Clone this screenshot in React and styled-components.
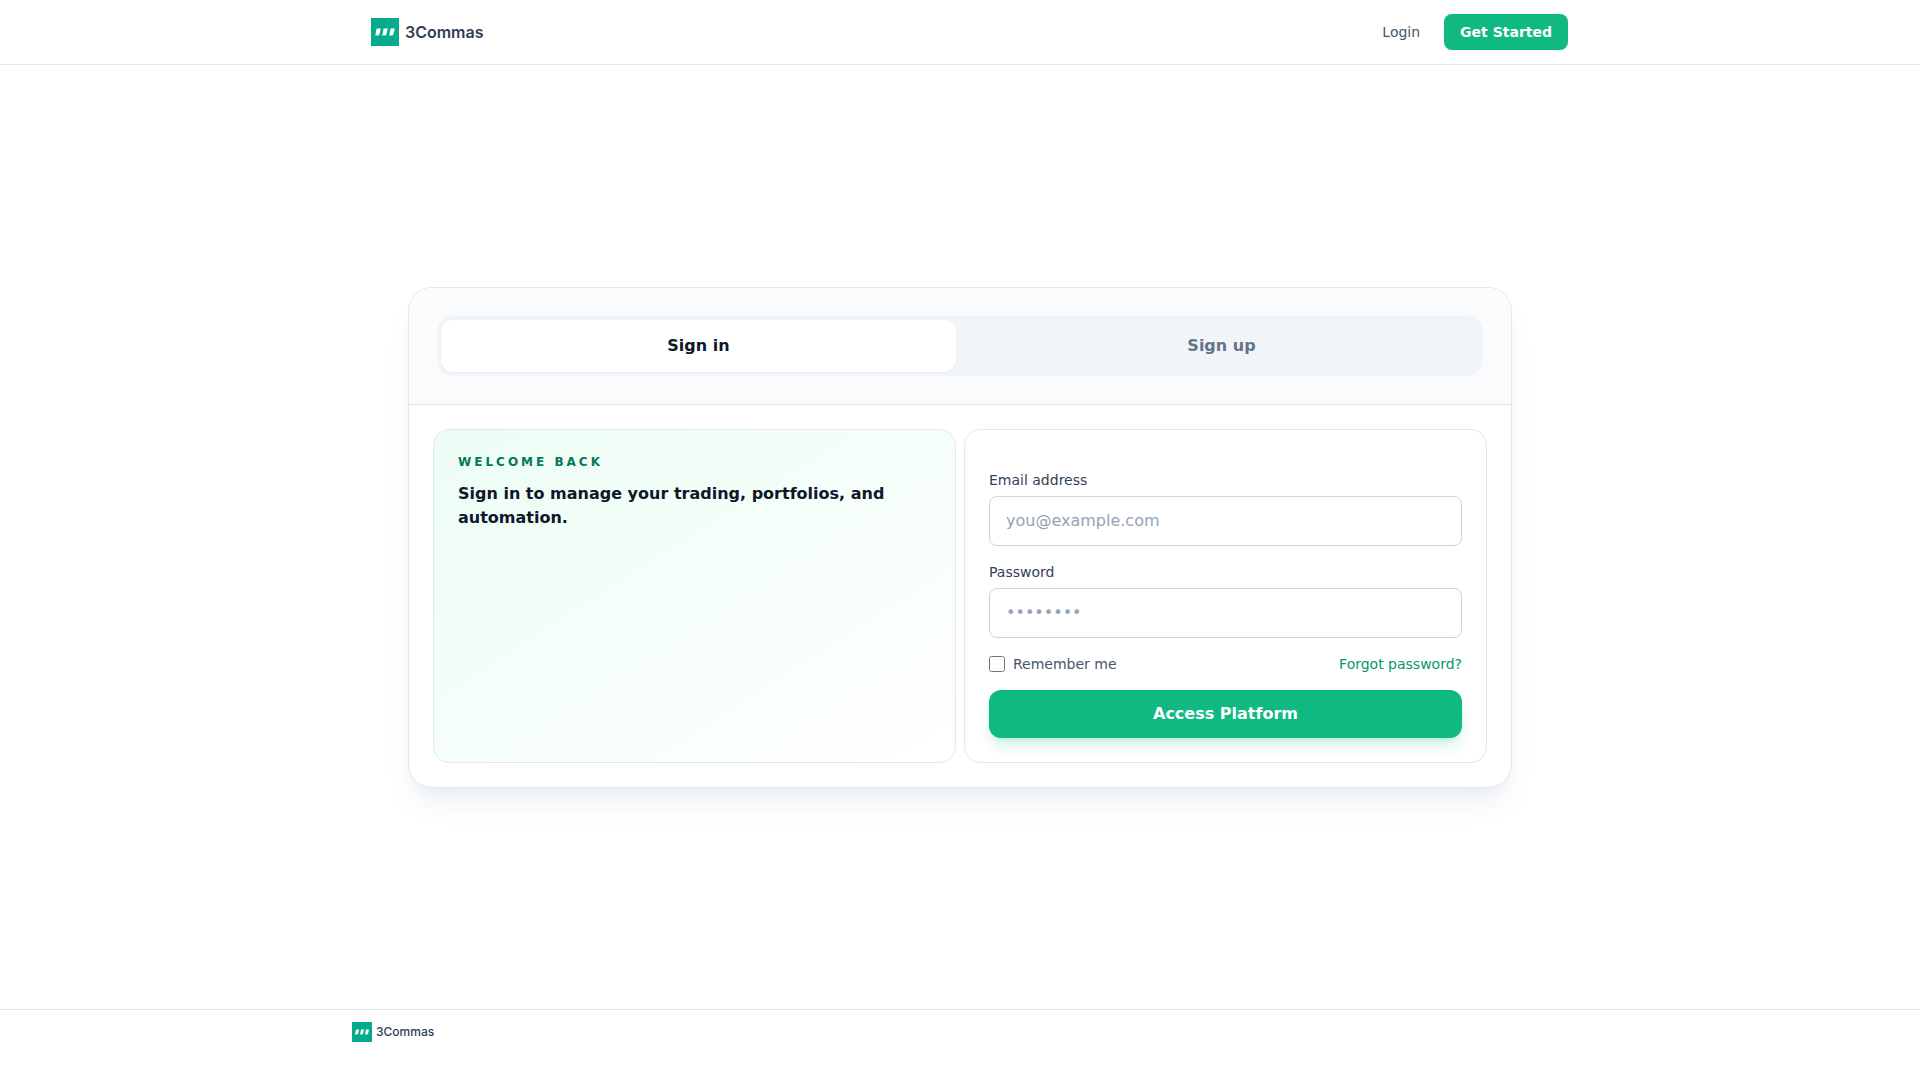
import React, { useState } from 'react';
import styled, { createGlobalStyle } from 'styled-components';

const colors = {
  brand: '#10b981',
  brandDark: '#059669',
  logo: '#05ab8c',
  ink: '#0f172a',
  text: '#334155',
  muted: '#475569',
  faint: '#64748b',
  placeholder: '#94a3b8',
  border: '#e2e8f0',
  inputBorder: '#cbd5e1',
};

const GlobalStyle = createGlobalStyle`
  *, *::before, *::after {
    box-sizing: border-box;
  }
  body {
    margin: 0;
    background: #fff;
    color: ${colors.ink};
    font-family: 'DejaVu Sans', sans-serif;
    font-size: 16px;
    line-height: 24px;
  }
  button, input {
    font: inherit;
    color: inherit;
  }
`;

const Page = styled.div`
  min-height: 100vh;
  display: flex;
  flex-direction: column;
`;

const Container = styled.div`
  width: 100%;
  max-width: 1280px;
  margin: 0 auto;
  padding: 0 32px;
`;

const Header = styled.header`
  border-bottom: 1px solid ${colors.border};
`;

const HeaderRow = styled(Container)`
  height: 64px;
  display: flex;
  align-items: center;
  justify-content: space-between;
`;

const Nav = styled.nav`
  display: flex;
  align-items: center;
  gap: 24px;
  font-size: 14px;
  line-height: 20px;
`;

const NavLink = styled.a`
  color: ${colors.muted};
  text-decoration: none;
`;

const NavButton = styled.a`
  padding: 8px 16px;
  border-radius: 8px;
  background: ${colors.brand};
  color: #fff;
  font-weight: 600;
  text-decoration: none;
`;

const LogoLink = styled.a`
  display: flex;
  align-items: center;
  gap: ${props => (props.$small ? '4px' : '6px')};
  padding-left: ${props => (props.$small ? '0' : '19px')};
  color: #2f3e54;
  font-family: Inter, sans-serif;
  font-size: ${props => (props.$small ? '12px' : '16px')};
  line-height: ${props => (props.$small ? '20px' : '28px')};
  font-weight: ${props => (props.$small ? '500' : '600')};
  text-decoration: none;

  svg {
    width: ${props => (props.$small ? '20px' : '28px')};
    height: ${props => (props.$small ? '20px' : '28px')};
  }
`;

const Main = styled.main`
  flex: 1;
  display: flex;
  align-items: center;
  justify-content: center;
  padding: 48px 24px;
`;

const Card = styled.section`
  width: 100%;
  max-width: 1104px;
  overflow: hidden;
  border: 1px solid ${colors.border};
  border-radius: 24px;
  background: #fff;
  box-shadow: 0 20px 25px -5px rgba(226, 232, 240, 0.6), 0 8px 10px -6px rgba(226, 232, 240, 0.6);
`;

const CardTop = styled.div`
  padding: 28px;
  border-bottom: 1px solid ${colors.border};
  background: #fafbfd;
`;

const Tabs = styled.div`
  display: grid;
  grid-template-columns: 1fr 1fr;
  gap: 8px;
  padding: 4px;
  border-radius: 16px;
  background: #f1f5f9;
`;

const Tab = styled.button`
  padding: 14px 16px;
  border: 0;
  border-radius: 12px;
  background: ${props => (props.$active ? '#fff' : 'transparent')};
  box-shadow: ${props => (props.$active ? '0 1px 2px rgba(15, 23, 42, 0.05)' : 'none')};
  color: ${props => (props.$active ? colors.ink : colors.faint)};
  font-weight: 600;
  cursor: pointer;
`;

const CardBody = styled.div`
  display: grid;
  grid-template-columns: 1fr 1fr;
  gap: 8px;
  padding: 24px;
`;

const Panel = styled.div`
  padding: 24px;
  border: 1px solid ${colors.border};
  border-radius: 16px;
`;

const Intro = styled(Panel)`
  background: linear-gradient(to bottom right, #ecfdf5, #fff);
`;

const Eyebrow = styled.p`
  margin: 0 0 12px;
  color: #047857;
  font-size: 12px;
  line-height: 16px;
  font-weight: 600;
  letter-spacing: 3px;
  text-transform: uppercase;
`;

const Headline = styled.h1`
  margin: 0;
  font-size: 16px;
  line-height: 24px;
  font-weight: 600;
`;

const Form = styled.form`
  display: flex;
  flex-direction: column;
  gap: 16px;
  padding-top: 16px;
`;

const Field = styled.div`
  display: flex;
  flex-direction: column;
  gap: 6px;
`;

const Label = styled.label`
  color: ${colors.text};
  font-size: 14px;
  line-height: 20px;
  font-weight: 500;
`;

const Input = styled.input`
  width: 100%;
  padding: 12px 16px;
  border: 1px solid ${colors.inputBorder};
  border-radius: 8px;
  background: #fff;
  line-height: 24px;

  &::placeholder {
    color: ${colors.placeholder};
    opacity: 1;
  }
`;

const FormRow = styled.div`
  display: flex;
  align-items: center;
  justify-content: space-between;
  font-size: 14px;
  line-height: 20px;
`;

const Remember = styled.label`
  display: flex;
  align-items: center;
  gap: 8px;
  color: ${colors.muted};
`;

const Checkbox = styled.input`
  width: 16px;
  height: 16px;
  margin: 0;
`;

const TextLink = styled.a`
  color: ${colors.brandDark};
  font-weight: 500;
  text-decoration: none;
`;

const Submit = styled.button`
  padding: 12px 16px;
  border: 0;
  border-radius: 12px;
  background: ${colors.brand};
  box-shadow: 0 10px 15px -3px rgba(16, 185, 129, 0.2), 0 4px 6px -4px rgba(16, 185, 129, 0.2);
  color: #fff;
  font-weight: 600;
  cursor: pointer;
`;

const Footer = styled.footer`
  padding: 12px 0 38px;
  border-top: 1px solid ${colors.border};
`;

const FooterRow = styled(Container)`
  display: flex;
`;

const Logo = ({ small }) => (
  <LogoLink href="#" $small={small}>
    <svg viewBox="0 0 28 28" aria-hidden="true">
      <rect width="28" height="28" fill={colors.logo} />
      <path
        fill="#fff"
        d="M5.6 10.4h4.2l-1.2 5.4-1.1 1.6H4.3zM12.6 10.4h4.2l-1.2 5.4-1.1 1.6h-3.2zM19.6 10.4h4.2l-1.2 5.4-1.1 1.6h-3.2z"
      />
    </svg>
    <span>3Commas</span>
  </LogoLink>
);

const App = () => {
  const [tab, setTab] = useState('signin');

  return (
    <Page>
      <GlobalStyle />
      <Header>
        <HeaderRow>
          <Logo />
          <Nav>
            <NavLink href="#login">Login</NavLink>
            <NavButton href="#signup">Get Started</NavButton>
          </Nav>
        </HeaderRow>
      </Header>

      <Main>
        <Card>
          <CardTop>
            <Tabs role="tablist">
              <Tab
                type="button"
                role="tab"
                aria-selected={tab === 'signin'}
                $active={tab === 'signin'}
                onClick={() => setTab('signin')}
              >
                Sign in
              </Tab>
              <Tab
                type="button"
                role="tab"
                aria-selected={tab === 'signup'}
                $active={tab === 'signup'}
                onClick={() => setTab('signup')}
              >
                Sign up
              </Tab>
            </Tabs>
          </CardTop>

          <CardBody>
            <Intro>
              <Eyebrow>Welcome back</Eyebrow>
              <Headline>Sign in to manage your trading, portfolios, and automation.</Headline>
            </Intro>

            <Panel>
              <Form onSubmit={e => e.preventDefault()}>
                <Field>
                  <Label htmlFor="email">Email address</Label>
                  <Input id="email" type="email" placeholder="you@example.com" />
                </Field>
                <Field>
                  <Label htmlFor="password">Password</Label>
                  <Input id="password" type="password" placeholder="••••••••" />
                </Field>
                <FormRow>
                  <Remember htmlFor="remember">
                    <Checkbox id="remember" type="checkbox" />
                    Remember me
                  </Remember>
                  <TextLink href="#forgot">Forgot password?</TextLink>
                </FormRow>
                <Submit type="submit">Access Platform</Submit>
              </Form>
            </Panel>
          </CardBody>
        </Card>
      </Main>

      <Footer>
        <FooterRow>
          <Logo small />
        </FooterRow>
      </Footer>
    </Page>
  );
};

export default App;
